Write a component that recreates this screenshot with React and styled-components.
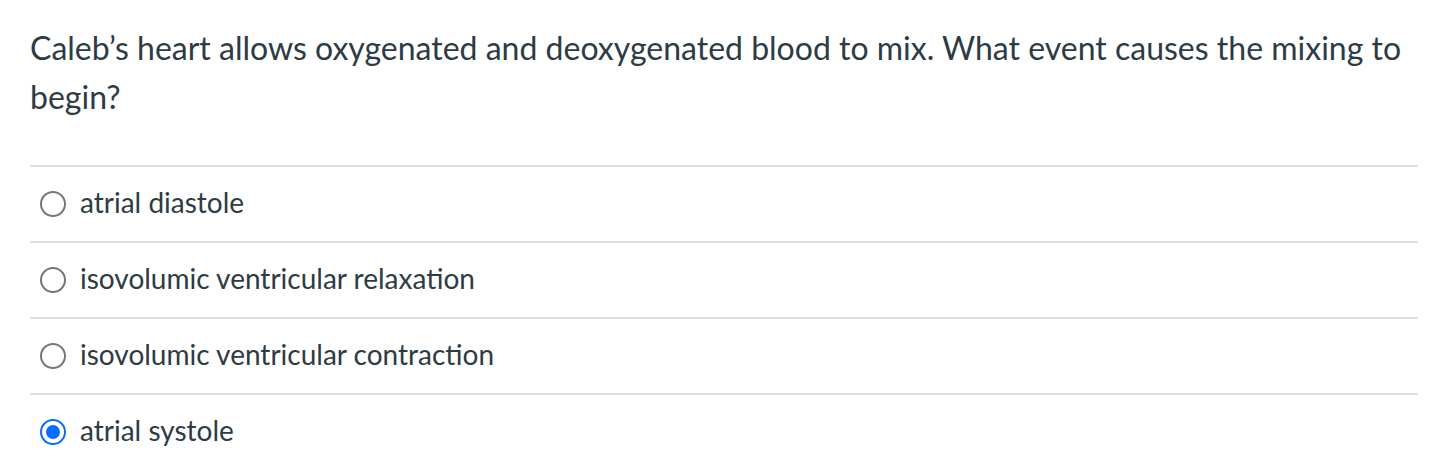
import React from 'react';
import styled, { createGlobalStyle } from 'styled-components';

const GlobalStyle = createGlobalStyle`
	body {
		margin: 0;
		background: #ffffff;
		font-family: Lato, "Liberation Sans", sans-serif;
		color: #2d3b45;
	}
`;

const Page = styled.div`
	padding: 23px 32px 0 30px;
`;

const Question = styled.p`
	margin: 0 0 44px;
	font-size: 32px;
	line-height: 49px;
	color: #2d3b45;
`;

const Answers = styled.div`
	display: flex;
	flex-direction: column;
`;

const Answer = styled.label`
	display: flex;
	align-items: center;
	gap: 14px;
	height: 70px;
	padding: 0 0 4px 10px;
	border-top: 2px solid #dcdcdc;
	font-size: 28px;
	line-height: 1;
	color: #2d3b45;
	cursor: pointer;
`;

const Radio = styled.span`
	box-sizing: border-box;
	width: 26px;
	height: 26px;
	margin-top: 4px;
	border-radius: 50%;
	border: 2px solid ${p => (p.checked ? '#0a6cff' : '#767676')};
	display: flex;
	align-items: center;
	justify-content: center;
	&::after {
		content: '';
		width: 14px;
		height: 14px;
		border-radius: 50%;
		background: #0a6cff;
		display: ${p => (p.checked ? 'block' : 'none')};
	}
`;

const options = [
	'atrial diastole',
	'isovolumic ventricular relaxation',
	'isovolumic ventricular contraction',
	'atrial systole',
];

export default function App() {
	const [selected, setSelected] = React.useState(3);
	return (
		<Page>
			<GlobalStyle />
			<Question>
				Caleb’s heart allows oxygenated and deoxygenated blood to mix. What event causes the mixing to begin?
			</Question>
			<Answers>
				{options.map((text, i) => (
					<Answer key={text} onClick={() => setSelected(i)}>
						<Radio checked={selected === i} />
						<span>{text}</span>
					</Answer>
				))}
			</Answers>
		</Page>
	);
}
